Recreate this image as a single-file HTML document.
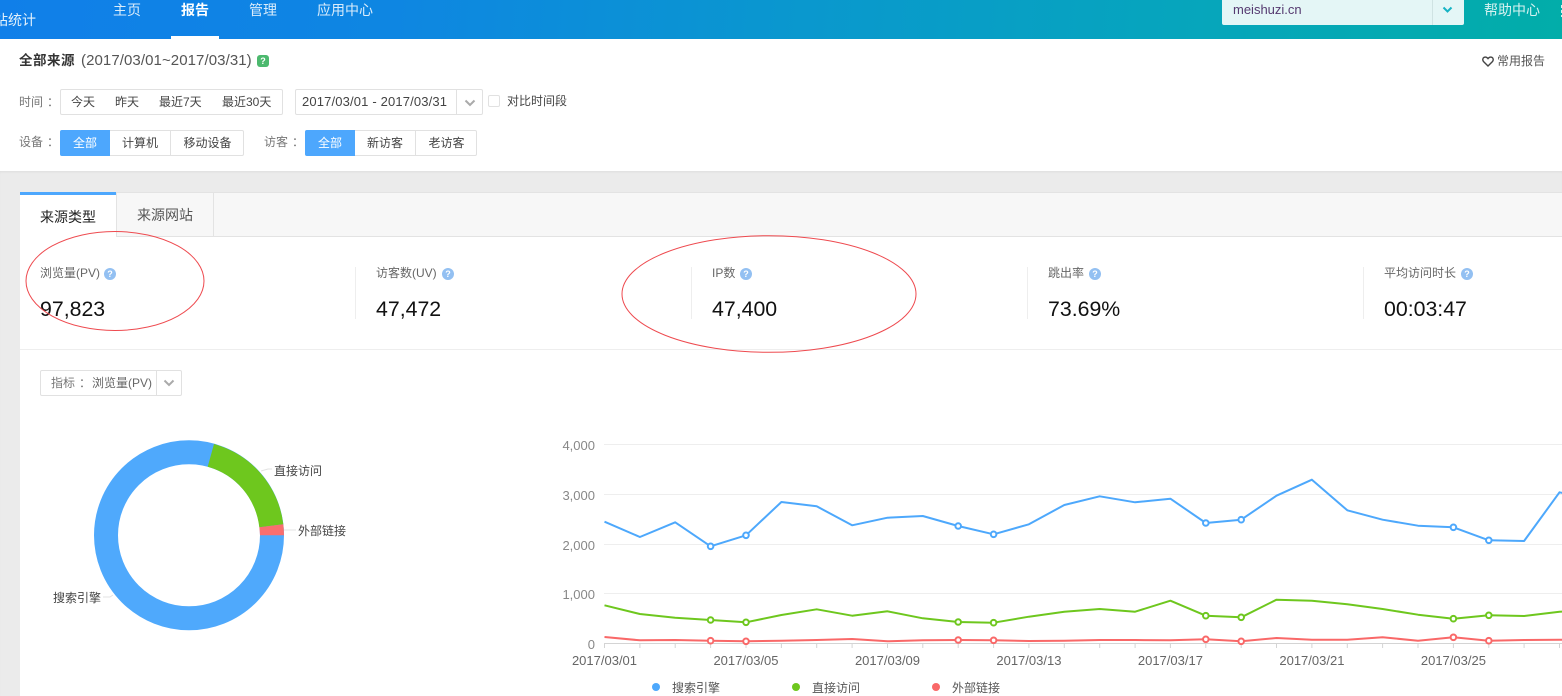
<!DOCTYPE html>
<html lang="zh">
<head>
<meta charset="utf-8">
<title>全部来源</title>
<style>
html,body{margin:0;padding:0;background:#fff}
#p{position:relative;width:1562px;height:696px;overflow:hidden;background:#fff;font-family:"Liberation Sans","Noto Sans CJK SC",sans-serif;font-size:12px;color:#555}
#p div,#p span.t{position:absolute;white-space:nowrap;box-sizing:border-box}
.t{line-height:18px;height:18px}
.t i{font-style:normal;position:relative;left:4px}
.n{font-size:14px;color:#d9ecfb}
.l{color:#777}
.c{color:#444}
.b{border:1px solid #e1e1e1;background:#fff}
.on{background:#4da7fd;color:#fff;text-align:center;line-height:26px}
.btn{text-align:center;line-height:26px;color:#444}
.m{color:#666}
.v{font-size:21.3px;color:#111;line-height:28px;height:28px}
.q{width:12px;height:12px;border-radius:50%;background:#93c0f2;color:#fff;font-size:9px;line-height:12px;text-align:center;font-weight:bold}
.ln{background:#eee;width:1px;height:52px;top:267px}
</style>
</head>
<body>
<div id="p">
  <!-- header -->
  <div style="left:0;top:0;width:1562px;height:39px;background:linear-gradient(96deg,#107fe9 0%,#0e86e2 25%,#0a97cf 50%,#06a5bd 75%,#02ada9 100%)"></div>
  <span class="t n" style="left:-6px;top:11px;color:#e3f1fb">站统计</span>
  <span class="t n" style="left:113px;top:1px">主页</span>
  <span class="t n" style="left:181px;top:1px;color:#fff;font-weight:bold">报告</span>
  <div style="left:171px;top:36px;width:48px;height:3px;background:#fff"></div>
  <span class="t n" style="left:249px;top:1px">管理</span>
  <span class="t n" style="left:317px;top:1px">应用中心</span>
  <div style="left:1222px;top:0;width:242px;height:25px;background:#e4f6f6;border-radius:0 0 2px 2px"></div>
  <div style="left:1432px;top:0;width:1px;height:25px;background:#cfe3e3"></div>
  <svg style="position:absolute;left:1442px;top:6px" width="11" height="8" viewBox="0 0 11 8"><path d="M1.5 1.5L5.5 5.5L9.5 1.5" fill="none" stroke="#16b3c4" stroke-width="2"/></svg>
  <span class="t" style="left:1233px;top:1px;font-size:13px;color:#553a70">meishuzi.cn</span>
  <span class="t n" style="left:1484px;top:1px;color:#d6f2f0">帮助中心</span>
  <div style="left:1561px;top:5px;width:1px;height:3px;background:#d6f2f0"></div>
  <div style="left:1561px;top:10px;width:1px;height:3px;background:#d6f2f0"></div>
  <div style="left:1561px;top:15px;width:1px;height:2px;background:#d6f2f0"></div>

  <!-- title -->
  <span class="t" style="left:19px;top:52px;color:#333;font-weight:bold;font-size:13.5px;letter-spacing:.5px">全部来源</span>
  <span class="t" style="left:81px;top:52px;font-size:15px;color:#555;letter-spacing:.08px">(2017/03/01~2017/03/31)</span>
  <div style="left:257px;top:55px;width:12px;height:12px;border-radius:3px;background:#4cb96e;color:#fff;font-size:9px;line-height:12px;text-align:center;font-weight:bold">?</div>
  <svg style="position:absolute;left:1482px;top:56px" width="12" height="11" viewBox="0 0 12 11"><path d="M6 10L1.600 5.600C.3 4.200.6 2.200 2 1.400C3.400.6 5 1.200 6 2.600C7 1.200 8.600.6 10 1.400C11.400 2.200 11.700 4.200 10.400 5.600Z" fill="none" stroke="#444" stroke-width="1.400"/></svg>
  <span class="t" style="left:1497px;top:52px;color:#555">常用报告</span>

  <!-- time row -->
  <span class="t l" style="left:19px;top:93px">时间<i>：</i></span>
  <div class="b" style="left:60px;top:89px;width:223px;height:26px;border-radius:2px"></div>
  <span class="t c" style="left:71px;top:93px">今天</span>
  <span class="t c" style="left:115px;top:93px">昨天</span>
  <span class="t c" style="left:159px;top:93px">最近7天</span>
  <span class="t c" style="left:222px;top:93px">最近30天</span>
  <div class="b" style="left:295px;top:89px;width:188px;height:26px;border-radius:2px"></div>
  <div style="left:456px;top:90px;width:1px;height:24px;background:#e1e1e1"></div>
  <span class="t c" style="left:302px;top:93px;font-size:13px;letter-spacing:.15px">2017/03/01 - 2017/03/31</span>
  <svg style="position:absolute;left:464px;top:99px" width="12" height="8" viewBox="0 0 12 8"><path d="M1.500 1.500L6 6L10.500 1.500" fill="none" stroke="#aaa" stroke-width="2"/></svg>
  <div class="b" style="left:488px;top:95px;width:12px;height:12px;border-radius:2px"></div>
  <span class="t c" style="left:507px;top:92px">对比时间段</span>

  <!-- filter row -->
  <span class="t l" style="left:19px;top:133px">设备<i>：</i></span>
  <div class="b" style="left:60px;top:130px;width:184px;height:26px;border-radius:2px"></div>
  <div class="on" style="left:60px;top:130px;width:50px;height:26px;border-radius:2px 0 0 2px">全部</div>
  <div class="btn" style="left:110px;top:130px;width:60px;height:26px">计算机</div>
  <div style="left:170px;top:131px;width:1px;height:24px;background:#e1e1e1"></div>
  <div class="btn" style="left:171px;top:130px;width:73px;height:26px">移动设备</div>
  <span class="t l" style="left:264px;top:133px">访客<i>：</i></span>
  <div class="b" style="left:305px;top:130px;width:172px;height:26px;border-radius:2px"></div>
  <div class="on" style="left:305px;top:130px;width:50px;height:26px;border-radius:2px 0 0 2px">全部</div>
  <div class="btn" style="left:355px;top:130px;width:60px;height:26px">新访客</div>
  <div style="left:415px;top:131px;width:1px;height:24px;background:#e1e1e1"></div>
  <div class="btn" style="left:416px;top:130px;width:61px;height:26px">老访客</div>

  <!-- grey area -->
  <div style="left:0;top:171px;width:1562px;height:525px;background:#ebebeb;box-shadow:inset 0 2px 2px -1px #ddd"></div>
  <!-- card -->
  <div style="left:20px;top:192px;width:1542px;height:504px;background:#fff"></div>
  <div style="left:117px;top:192px;width:1445px;height:45px;background:#f7f7f7;border-top:1px solid #e3e3e3;border-bottom:1px solid #e3e3e3"></div>
  <div style="left:20px;top:192px;width:97px;height:3px;background:#4da7fd"></div>
  <div style="left:116px;top:192px;width:1px;height:45px;background:#e3e3e3"></div>
  <div style="left:213px;top:192px;width:1px;height:45px;background:#e3e3e3"></div>
  <span class="t" style="left:40px;top:208px;font-size:14px;color:#222">来源类型</span>
  <span class="t" style="left:137px;top:206px;font-size:14px;color:#555">来源网站</span>

  <!-- metrics -->
  <span class="t m" style="left:40px;top:264px">浏览量(PV)</span><div class="q" style="left:104px;top:268px">?</div>
  <span class="t v" style="left:40px;top:295px">97,823</span>
  <div class="ln" style="left:355px"></div>
  <span class="t m" style="left:376px;top:264px">访客数(UV)</span><div class="q" style="left:442px;top:268px">?</div>
  <span class="t v" style="left:376px;top:295px">47,472</span>
  <div class="ln" style="left:691px"></div>
  <span class="t m" style="left:712px;top:264px">IP数</span><div class="q" style="left:740px;top:268px">?</div>
  <span class="t v" style="left:712px;top:295px">47,400</span>
  <div class="ln" style="left:1027px"></div>
  <span class="t m" style="left:1048px;top:264px">跳出率</span><div class="q" style="left:1089px;top:268px">?</div>
  <span class="t v" style="left:1048px;top:295px">73.69%</span>
  <div class="ln" style="left:1363px"></div>
  <span class="t m" style="left:1384px;top:264px">平均访问时长</span><div class="q" style="left:1461px;top:268px">?</div>
  <span class="t v" style="left:1384px;top:295px">00:03:47</span>
  <div style="left:20px;top:349px;width:1542px;height:1px;background:#eee"></div>

  <!-- select -->
  <div class="b" style="left:40px;top:370px;width:142px;height:26px;border-radius:2px"></div>
  <div style="left:156px;top:371px;width:1px;height:24px;background:#e1e1e1"></div>
  <span class="t l" style="left:51px;top:374px">指标<i>：</i></span>
  <span class="t m" style="left:92px;top:374px">浏览量(PV)</span>
  <svg style="position:absolute;left:163px;top:379px" width="12" height="8" viewBox="0 0 12 8"><path d="M1.500 1.500L6 6L10.500 1.500" fill="none" stroke="#aaa" stroke-width="2"/></svg>

  <!-- charts + annotations -->
  <svg style="position:absolute;left:0;top:0" width="1562" height="696" viewBox="0 0 1562 696" font-family="&quot;Liberation Sans&quot;,&quot;Noto Sans CJK SC&quot;,sans-serif">
    <!-- donut -->
    <circle cx="189" cy="535.300" r="83" fill="none" stroke="#4fa9fc" stroke-width="24"/>
    <path d="M214 444 A95 95 0 0 1 283.300 524.300 L259.300 527.300 A71 71 0 0 0 207.700 466.700Z" fill="#6ec71e"/>
    <path d="M283.300 524.300 A95 95 0 0 1 284 535.300 L260 535.300 A71 71 0 0 0 259.300 527.300Z" fill="#f96f6f"/>
    <path d="M261 471 L268 469 L272 469" fill="none" stroke="#e3e3e3"/>
    <path d="M284 530 L296 530" fill="none" stroke="#e3e3e3"/>
    <path d="M103 597 L110 597 L113 595" fill="none" stroke="#e3e3e3"/>
    <text x="274" y="475" font-size="12" fill="#444">直接访问</text>
    <text x="298" y="535" font-size="12" fill="#444">外部链接</text>
    <text x="53" y="602" font-size="12" fill="#444">搜索引擎</text>

    <!-- grid -->
    <g stroke="#eeeeee" stroke-width="1">
      <path d="M604 444.500H1562M604 494.500H1562M604 544.500H1562M604 593.500H1562"/>
    </g>
    <path d="M604 643.500H1562" stroke="#d4d4d4"/>
    <path stroke="#d4d4d4" d="M604.500 644v4M639.900 644v4M675.200 644v4M710.600 644v4M746 644v4M781.400 644v4M816.700 644v4M852.100 644v4M887.500 644v4M922.800 644v4M958.200 644v4M993.600 644v4M1028.900 644v4M1064.300 644v4M1099.700 644v4M1135.100 644v4M1170.400 644v4M1205.800 644v4M1241.200 644v4M1276.500 644v4M1311.900 644v4M1347.300 644v4M1382.600 644v4M1418 644v4M1453.400 644v4M1488.800 644v4M1524.100 644v4M1559.500 644v4"/>

    <!-- axis labels -->
    <g font-size="13" fill="#888" text-anchor="end">
      <text x="595" y="450">4,000</text>
      <text x="595" y="500">3,000</text>
      <text x="595" y="550">2,000</text>
      <text x="595" y="599">1,000</text>
      <text x="595" y="649">0</text>
    </g>
    <g font-size="13" fill="#666" text-anchor="middle">
      <text x="604.500" y="665">2017/03/01</text>
      <text x="746" y="665">2017/03/05</text>
      <text x="887.500" y="665">2017/03/09</text>
      <text x="1028.900" y="665">2017/03/13</text>
      <text x="1170.400" y="665">2017/03/17</text>
      <text x="1311.900" y="665">2017/03/21</text>
      <text x="1453.400" y="665">2017/03/25</text>
    </g>

    <!-- series -->
    <g fill="none" stroke-width="2" stroke-linejoin="round">
      <polyline stroke="#4da8fc" points="604.500,521.700 639.900,537 675.200,522.300 710.600,546.300 746,535.300 781.400,502 816.700,506.300 852.100,525.300 887.500,517.700 922.800,516 958.200,526 993.600,534.300 1028.900,524.300 1064.300,505 1099.700,496.300 1135.100,502.300 1170.400,498.700 1205.800,523 1241.200,519.700 1276.500,495.700 1311.900,479.700 1347.300,510.300 1382.600,519.700 1418,525.700 1453.400,527.300 1488.800,540.300 1524.100,541 1559.500,492.300 1594.900,500"/>
      <polyline stroke="#6ec71e" points="604.500,605.300 639.900,614 675.200,617.700 710.600,620 746,622.300 781.400,615 816.700,609.300 852.100,615.700 887.500,611.300 922.800,618.300 958.200,622 993.600,622.700 1028.900,616.700 1064.300,611.700 1099.700,609 1135.100,611.700 1170.400,600.700 1205.800,615.700 1241.200,617.300 1276.500,599.700 1311.900,600.700 1347.300,604.300 1382.600,609 1418,614.700 1453.400,618.700 1488.800,615.300 1524.100,616 1559.500,611.700 1594.900,610"/>
      <polyline stroke="#f96868" points="604.500,637 639.900,640.300 675.200,640 710.600,640.700 746,641.300 781.400,640.700 816.700,640 852.100,639 887.500,641.300 922.800,640.300 958.200,640 993.600,640.300 1028.900,641 1064.300,640.700 1099.700,640 1135.100,640 1170.400,640.300 1205.800,639.300 1241.200,641.300 1276.500,638 1311.900,639.700 1347.300,639.700 1382.600,637.300 1418,640.700 1453.400,637.300 1488.800,640.700 1524.100,640 1559.500,639.700 1594.900,640"/>
    </g>
    <g fill="#fff" stroke-width="2">
      <g stroke="#4da8fc">
        <circle cx="710.600" cy="546.300" r="2.800"/><circle cx="746" cy="535.300" r="2.800"/><circle cx="958.200" cy="526" r="2.800"/><circle cx="993.600" cy="534.300" r="2.800"/><circle cx="1205.800" cy="523" r="2.800"/><circle cx="1241.200" cy="519.700" r="2.800"/><circle cx="1453.400" cy="527.300" r="2.800"/><circle cx="1488.800" cy="540.300" r="2.800"/>
      </g>
      <g stroke="#6ec71e">
        <circle cx="710.600" cy="620" r="2.800"/><circle cx="746" cy="622.300" r="2.800"/><circle cx="958.200" cy="622" r="2.800"/><circle cx="993.600" cy="622.700" r="2.800"/><circle cx="1205.800" cy="615.700" r="2.800"/><circle cx="1241.200" cy="617.300" r="2.800"/><circle cx="1453.400" cy="618.700" r="2.800"/><circle cx="1488.800" cy="615.300" r="2.800"/>
      </g>
      <g stroke="#f96868">
        <circle cx="710.600" cy="640.700" r="2.800"/><circle cx="746" cy="641.300" r="2.800"/><circle cx="958.200" cy="640" r="2.800"/><circle cx="993.600" cy="640.300" r="2.800"/><circle cx="1205.800" cy="639.300" r="2.800"/><circle cx="1241.200" cy="641.300" r="2.800"/><circle cx="1453.400" cy="637.300" r="2.800"/><circle cx="1488.800" cy="640.700" r="2.800"/>
      </g>
    </g>

    <!-- legend -->
    <circle cx="656" cy="687" r="4" fill="#4da8fc"/>
    <text x="672" y="692" font-size="12" fill="#555">搜索引擎</text>
    <circle cx="796" cy="687" r="4" fill="#6ec71e"/>
    <text x="812" y="692" font-size="12" fill="#555">直接访问</text>
    <circle cx="936" cy="687" r="4" fill="#f96868"/>
    <text x="952" y="692" font-size="12" fill="#555">外部链接</text>

    <!-- hand-drawn annotations -->
    <ellipse cx="115" cy="281" rx="89" ry="49.500" fill="none" stroke="#ee4a4f" stroke-width="1"/>
    <ellipse cx="769" cy="294" rx="147" ry="58.300" fill="none" stroke="#ee4a4f" stroke-width="1"/>
  </svg>
</div>
</body>
</html>
